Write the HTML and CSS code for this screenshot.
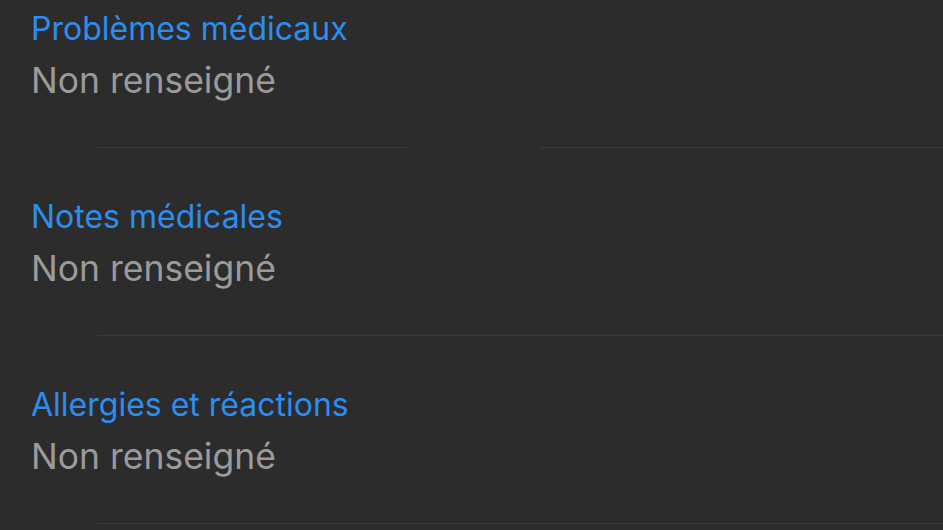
FILE: index.html
```html
<!DOCTYPE html>
<html lang="fr">
<head>
<meta charset="utf-8">
<link rel="stylesheet" href="styles.css">
</head>
<body>
<div class="list">
  <div class="item">
    <div class="title">Problèmes médicaux</div>
    <div class="value">Non renseigné</div>
  </div>
  <div class="sep sep-gap"></div>
  <div class="item">
    <div class="title">Notes médicales</div>
    <div class="value">Non renseigné</div>
  </div>
  <div class="sep"></div>
  <div class="item">
    <div class="title">Allergies et réactions</div>
    <div class="value">Non renseigné</div>
  </div>
  <div class="sep"></div>
</div>
</body>
</html>
```
FILE: styles.css
```css
html, body {
  margin: 0;
  padding: 0;
  background: #2c2c2c;
  height: 100%;
  overflow: hidden;
}
.list {
  font-family: Inter, "Noto Sans", sans-serif;
  padding-top: 10px;
}
.item {
  padding-left: 31px;
  padding-bottom: 44px;
}
.sep + .item {
  padding-top: 50px;
}
.title {
  color: #2b8ef0;
  font-size: 32px;
  line-height: 37px;
}
.value {
  color: #9b9b9b;
  font-size: 35.5px;
  line-height: 44px;
  margin-top: 12px;
}
.sep {
  height: 1px;
  margin-left: 97px;
  background: #3a3a3a;
}
.sep-gap {
  background: linear-gradient(to right, #3a3a3a 0, #3a3a3a 310px, transparent 310px, transparent 443px, #3a3a3a 443px);
}
```
